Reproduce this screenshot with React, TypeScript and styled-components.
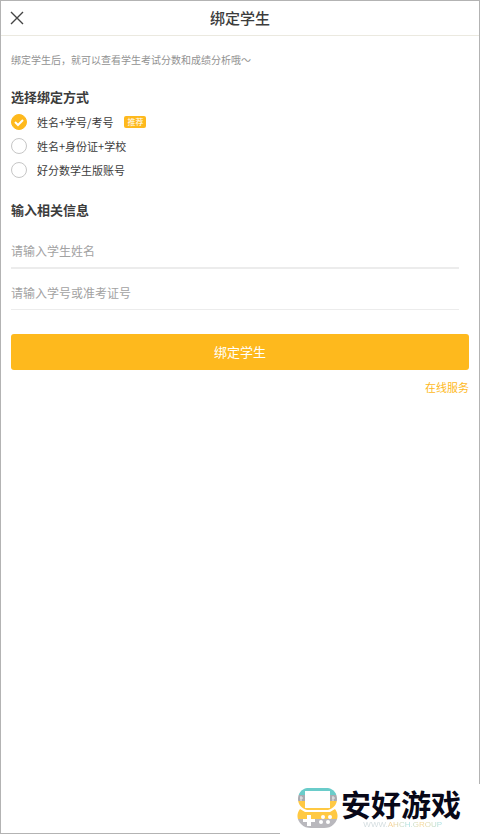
import React, { useState } from "react";
import styled, { createGlobalStyle } from "styled-components";

const GlobalStyle = createGlobalStyle`
  *, *::before, *::after { box-sizing: border-box; }
  body {
    margin: 0;
    background: #fff;
    color: #3c3c3c;
    font-family: "Noto Sans CJK SC", "Noto Sans", sans-serif;
  }
  button, input { font-family: inherit; }
`;

const Page = styled.div`
  position: relative;
  min-height: 100vh;
  border: 1px solid #b3b3b3;
  background: #fff;
`;

const Header = styled.header`
  display: grid;
  grid-template-columns: 32px 1fr 32px;
  align-items: center;
  height: 35px;
  border-bottom: 1px solid #ebe9e0;
`;

const CloseButton = styled.button`
  display: flex;
  align-items: center;
  justify-content: center;
  width: 32px;
  height: 34px;
  padding: 0;
  border: 0;
  background: none;
  color: #444;
  cursor: pointer;
`;

const Title = styled.h1`
  margin: 0;
  font-size: 15px;
  line-height: 22px;
  font-weight: 500;
  text-align: center;
`;

const Content = styled.main`
  display: flex;
  flex-direction: column;
  padding: 16px 10px;
`;

const Hint = styled.p`
  margin: 0 0 20px;
  font-size: 10px;
  line-height: 16px;
  color: #929292;
`;

const Form = styled.form`
  display: flex;
  flex-direction: column;
`;

const Group = styled.fieldset`
  margin: 0 0 19px;
  padding: 0;
  border: 0;
  min-width: 0;
`;

const GroupTitle = styled.legend`
  padding: 0;
  font-size: 13px;
  line-height: 18px;
  font-weight: 600;
  margin-bottom: 4px;
`;

const Option = styled.label`
  display: flex;
  align-items: center;
  height: 24px;
  font-size: 11px;
  line-height: 16px;
  cursor: pointer;
`;

const Radio = styled.input`
  appearance: none;
  flex: none;
  width: 16px;
  height: 16px;
  margin: 0 10px 0 0;
  border: 1px solid #c6c6c6;
  border-radius: 50%;
  background: #fff;

  &:checked {
    border-color: #feb91d;
    background: #feb91d;
  }
`;

const RadioBox = styled.span`
  position: relative;
  display: flex;
`;

const Tick = styled.svg`
  position: absolute;
  left: 0;
  top: 0;
  pointer-events: none;
`;

const Tag = styled.span`
  margin-left: 11px;
  padding: 0 3px;
  border-radius: 2px;
  background: #feb91d;
  color: #fff;
  font-size: 8px;
  line-height: 12px;
`;

const Fields = styled.div`
  display: flex;
  flex-direction: column;
  gap: 6px;
  padding: 10px 10px 0 0;
`;

const Field = styled.input<{ $strong?: boolean }>`
  width: 100%;
  height: ${(p) => (p.$strong ? 36 : 35)}px;
  padding: 0;
  border: 0;
  border-bottom: ${(p) => (p.$strong ? 2 : 1)}px solid #ececec;
  border-radius: 0;
  outline: 0;
  background: none;
  color: #3c3c3c;
  font-size: 12px;

  &::placeholder {
    color: #a2a2a2;
    opacity: 1;
  }
`;

const Submit = styled.button`
  height: 36px;
  margin-top: 5px;
  padding: 0;
  border: 0;
  border-radius: 3px;
  background: #feb91d;
  color: #fff;
  font-size: 13px;
  line-height: 20px;
  cursor: pointer;
`;

const ServiceLink = styled.a`
  align-self: flex-end;
  margin-top: 9px;
  font-size: 11px;
  line-height: 16px;
  color: #feb91d;
  text-decoration: none;
`;

const Watermark = styled.aside`
  position: absolute;
  right: -1px;
  bottom: -1px;
  display: flex;
  align-items: flex-start;
  gap: 3px;
  width: 200px;
  height: 50px;
  padding: 3px 0 0 17px;
  background: #fff;
`;

const Brand = styled.div`
  display: flex;
  flex-direction: column;
`;

const BrandName = styled.strong`
  font-size: 30px;
  line-height: 32px;
  font-weight: 700;
  color: #080818;
  white-space: nowrap;
`;

const BrandUrl = styled.span`
  align-self: flex-end;
  margin: 1px 19px 0 0;
  font-family: "Liberation Sans", sans-serif;
  font-size: 8px;
  line-height: 10px;
  color: transparent;
  background: linear-gradient(90deg, #cfd9dc 30%, #fbcf8a 36%, #a5e0e6 58%, #fbd68f 74%, #9fdfe8);
  background-clip: text;
  -webkit-background-clip: text;
`;

function ConsoleLogo() {
  return (
    <svg width="41" height="42" viewBox="0 0 41 42" aria-hidden="true">
      <defs>
        <clipPath id="upper">
          <path d="M10 1H31C37 2 40 7 40 12C40 17 37 21 31 23H10C4 21 1 17 1 12C1 7 4 2 10 1Z" />
        </clipPath>
        <clipPath id="lower">
          <path d="M3 22L8 25H33L38 22C42 27 41 33 37 37C34 40 31 41 27 41H14C10 41 7 40 4 37C0 33-1 27 3 22Z" />
        </clipPath>
      </defs>
      <g clipPath="url(#upper)">
        <path fill="#6accca" d="M0 0h41v8H0z" />
        <path fill="#aaaab0" d="M0 8h41v6H0z" />
        <path fill="#ffc943" d="M0 14h41v10H0z" />
        <path fill="#fff" d="M8 4h25v17H8z" />
      </g>
      <path stroke="#e9e9ec" d="M3 11h3M4 9v5M35 11h3M36 9v5" />
      <g clipPath="url(#lower)">
        <path fill="#ffc943" d="M0 22h41v10H0z" />
        <path fill="#b9b8bd" d="M0 32h41v10H0z" />
      </g>
      <path fill="#fff" d="M10 28h4v4h4v3h-4v4h-4v-4H6v-3h4z" />
      <g fill="#fff">
        <circle cx="26" cy="30" r="2" />
        <circle cx="33" cy="30" r="2" />
        <circle cx="24" cy="35" r="2" />
        <circle cx="31" cy="35" r="2" />
      </g>
    </svg>
  );
}

const methods = [
  { id: "number", label: "姓名+学号/考号", recommended: true },
  { id: "identity", label: "姓名+身份证+学校" },
  { id: "account", label: "好分数学生版账号" },
];

export default function App() {
  const [method, setMethod] = useState("number");

  return (
    <Page>
      <GlobalStyle />
      <Header>
        <CloseButton type="button" aria-label="关闭">
          <svg width="14" height="14" viewBox="0 0 14 14" fill="none" stroke="currentColor" strokeWidth="1.4">
            <path d="M1 1L13 13M13 1L1 13" />
          </svg>
        </CloseButton>
        <Title>绑定学生</Title>
      </Header>
      <Content>
        <Hint>绑定学生后，就可以查看学生考试分数和成绩分析哦～</Hint>
        <Form onSubmit={(e) => e.preventDefault()}>
          <Group>
            <GroupTitle>选择绑定方式</GroupTitle>
            {methods.map((m) => (
              <Option key={m.id}>
                <RadioBox>
                  <Radio
                    type="radio"
                    name="method"
                    value={m.id}
                    checked={method === m.id}
                    onChange={() => setMethod(m.id)}
                  />
                  {method === m.id && (
                    <Tick width="16" height="16" viewBox="0 0 16 16" fill="none" stroke="#fff" strokeWidth="2">
                      <path d="M4 8L7 11L12 6" />
                    </Tick>
                  )}
                </RadioBox>
                {m.label}
                {m.recommended && <Tag>推荐</Tag>}
              </Option>
            ))}
          </Group>
          <Group>
            <GroupTitle>输入相关信息</GroupTitle>
            <Fields>
              <Field $strong type="text" aria-label="学生姓名" placeholder="请输入学生姓名" />
              <Field type="text" aria-label="学号或准考证号" placeholder="请输入学号或准考证号" />
            </Fields>
          </Group>
          <Submit type="submit">绑定学生</Submit>
        </Form>
        <ServiceLink href="#service">在线服务</ServiceLink>
      </Content>
      <Watermark>
        <ConsoleLogo />
        <Brand>
          <BrandName>安好游戏</BrandName>
          <BrandUrl>WWW.AHCH.GROUP</BrandUrl>
        </Brand>
      </Watermark>
    </Page>
  );
}
